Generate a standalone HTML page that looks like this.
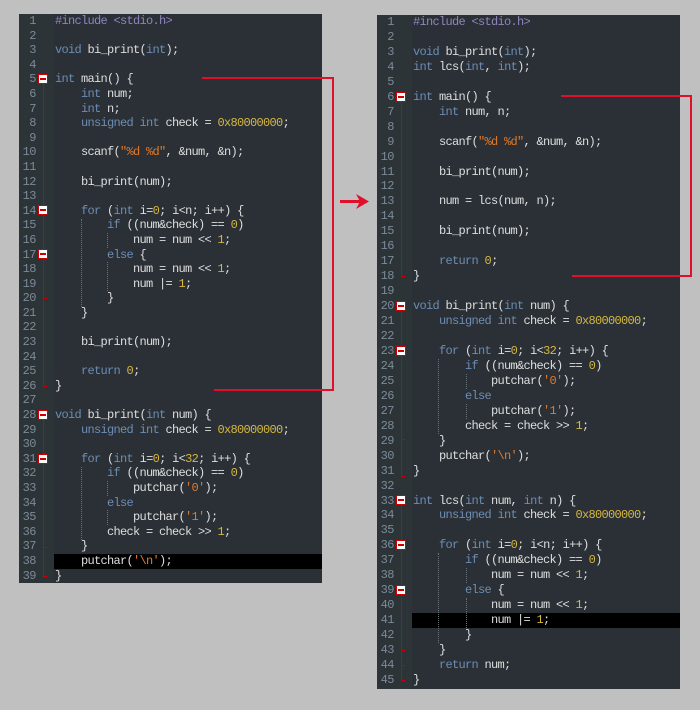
<!DOCTYPE html><html><head><style>
body{margin:0;width:700px;height:710px;background:#c0c0c0;position:relative;overflow:hidden;font-family:"Liberation Mono",monospace}
.p{position:absolute;background:#2a3035}
.g{position:absolute;left:0;top:0;bottom:0;width:35px;background:#2d3438}
.ln{position:absolute;left:0;width:17px;text-align:right;color:#7b8a98;font-size:12px;letter-spacing:-0.5px}
.c{position:absolute;white-space:pre;color:#dedede;font-size:12px;letter-spacing:-0.7px}
.k{color:#6d8db5}.n{color:#d6b840}.s{color:#e07a2c}.pp{color:#8f84bd}
.hl{position:absolute;background:#000}
.fb{position:absolute;width:8px;height:8px;background:#fff;border:1px solid #c00}
.fb:after{content:"";position:absolute;left:1px;top:3px;width:6px;height:2px;background:#c00}
.fv{position:absolute;width:1px;background:#c00}
.ft{position:absolute;height:1px;width:4px;background:#c00}
.gd{position:absolute;width:0;border-left:1px dotted #6a7378}
.r{position:absolute;background:#e0102a}
</style></head><body>

<div class="p" id="L" style="left:19px;top:14px;width:303px;height:569px">
<div class="g"></div>
<div class="hl" style="left:35px;right:0;top:540.2px;height:14.6px"></div>
<div class="fv" style="left:24px;top:66px;height:307px"></div>
<div class="fv" style="left:24px;top:401px;height:161px"></div>
<div class="ft" style="left:24px;top:284px"></div>
<div class="ft" style="left:24px;top:372px"></div>
<div class="ft" style="left:24px;top:533px"></div>
<div class="ft" style="left:24px;top:562px"></div>
<div class="fb" style="left:19px;top:60px"></div>
<div class="fb" style="left:19px;top:191px"></div>
<div class="fb" style="left:19px;top:235px"></div>
<div class="fb" style="left:19px;top:396px"></div>
<div class="fb" style="left:19px;top:440px"></div>
<div class="gd" style="left:62px;top:205px;height:88px"></div>
<div class="gd" style="left:88px;top:219px;height:15px"></div>
<div class="gd" style="left:88px;top:248px;height:29px"></div>
<div class="gd" style="left:62px;top:453px;height:73px"></div>
<div class="gd" style="left:88px;top:467px;height:15px"></div>
<div class="gd" style="left:88px;top:496px;height:15px"></div>
<div class="ln" style="top:0;line-height:14.6px">1<br>2<br>3<br>4<br>5<br>6<br>7<br>8<br>9<br>10<br>11<br>12<br>13<br>14<br>15<br>16<br>17<br>18<br>19<br>20<br>21<br>22<br>23<br>24<br>25<br>26<br>27<br>28<br>29<br>30<br>31<br>32<br>33<br>34<br>35<br>36<br>37<br>38<br>39</div>
<div class="c" style="left:36px;top:0;line-height:14.6px"><span class="pp">#include &lt;stdio.h&gt;</span>

<span class="k">void</span> bi_print(<span class="k">int</span>);

<span class="k">int</span> main() {
    <span class="k">int</span> num;
    <span class="k">int</span> n;
    <span class="k">unsigned int</span> check = <span class="n">0x80000000</span>;

    scanf(<span class="s">"%d %d"</span>, &amp;num, &amp;n);

    bi_print(num);

    <span class="k">for</span> (<span class="k">int</span> i=<span class="n">0</span>; i&lt;n; i++) {
        <span class="k">if</span> ((num&amp;check) == <span class="n">0</span>)
            num = num &lt;&lt; <span class="n">1</span>;
        <span class="k">else</span> {
            num = num &lt;&lt; <span class="n">1</span>;
            num |= <span class="n">1</span>;
        }
    }

    bi_print(num);

    <span class="k">return</span> <span class="n">0</span>;
}

<span class="k">void</span> bi_print(<span class="k">int</span> num) {
    <span class="k">unsigned int</span> check = <span class="n">0x80000000</span>;

    <span class="k">for</span> (<span class="k">int</span> i=<span class="n">0</span>; i&lt;<span class="n">32</span>; i++) {
        <span class="k">if</span> ((num&amp;check) == <span class="n">0</span>)
            putchar(<span class="s">'0'</span>);
        <span class="k">else</span>
            putchar(<span class="s">'1'</span>);
        check = check &gt;&gt; <span class="n">1</span>;
    }
    putchar(<span class="s">'\n'</span>);
}</div>
</div>

<div class="p" id="R" style="left:377px;top:15px;width:303px;height:674px">
<div class="g"></div>
<div class="hl" style="left:35px;right:0;top:598px;height:15px"></div>
<div class="fv" style="left:24px;top:82px;height:180px"></div>
<div class="fv" style="left:24px;top:291px;height:171px"></div>
<div class="fv" style="left:24px;top:485px;height:181px"></div>
<div class="ft" style="left:24px;top:261px"></div>
<div class="ft" style="left:24px;top:424px"></div>
<div class="ft" style="left:24px;top:461px"></div>
<div class="ft" style="left:24px;top:635px"></div>
<div class="ft" style="left:24px;top:650px"></div>
<div class="ft" style="left:24px;top:665px"></div>
<div class="fb" style="left:19px;top:77px"></div>
<div class="fb" style="left:19px;top:286px"></div>
<div class="fb" style="left:19px;top:331px"></div>
<div class="fb" style="left:19px;top:480px"></div>
<div class="fb" style="left:19px;top:525px"></div>
<div class="fb" style="left:19px;top:570px"></div>
<div class="gd" style="left:61px;top:344px;height:75px"></div>
<div class="gd" style="left:89px;top:359px;height:15px"></div>
<div class="gd" style="left:89px;top:389px;height:15px"></div>
<div class="gd" style="left:61px;top:538px;height:90px"></div>
<div class="gd" style="left:89px;top:553px;height:15px"></div>
<div class="gd" style="left:89px;top:583px;height:30px"></div>
<div class="ln" style="top:0;line-height:14.95px">1<br>2<br>3<br>4<br>5<br>6<br>7<br>8<br>9<br>10<br>11<br>12<br>13<br>14<br>15<br>16<br>17<br>18<br>19<br>20<br>21<br>22<br>23<br>24<br>25<br>26<br>27<br>28<br>29<br>30<br>31<br>32<br>33<br>34<br>35<br>36<br>37<br>38<br>39<br>40<br>41<br>42<br>43<br>44<br>45</div>
<div class="c" style="left:36px;top:0;line-height:14.95px"><span class="pp">#include &lt;stdio.h&gt;</span>

<span class="k">void</span> bi_print(<span class="k">int</span>);
<span class="k">int</span> lcs(<span class="k">int</span>, <span class="k">int</span>);

<span class="k">int</span> main() {
    <span class="k">int</span> num, n;

    scanf(<span class="s">"%d %d"</span>, &amp;num, &amp;n);

    bi_print(num);

    num = lcs(num, n);

    bi_print(num);

    <span class="k">return</span> <span class="n">0</span>;
}

<span class="k">void</span> bi_print(<span class="k">int</span> num) {
    <span class="k">unsigned int</span> check = <span class="n">0x80000000</span>;

    <span class="k">for</span> (<span class="k">int</span> i=<span class="n">0</span>; i&lt;<span class="n">32</span>; i++) {
        <span class="k">if</span> ((num&amp;check) == <span class="n">0</span>)
            putchar(<span class="s">'0'</span>);
        <span class="k">else</span>
            putchar(<span class="s">'1'</span>);
        check = check &gt;&gt; <span class="n">1</span>;
    }
    putchar(<span class="s">'\n'</span>);
}

<span class="k">int</span> lcs(<span class="k">int</span> num, <span class="k">int</span> n) {
    <span class="k">unsigned int</span> check = <span class="n">0x80000000</span>;

    <span class="k">for</span> (<span class="k">int</span> i=<span class="n">0</span>; i&lt;n; i++) {
        <span class="k">if</span> ((num&amp;check) == <span class="n">0</span>)
            num = num &lt;&lt; <span class="n">1</span>;
        <span class="k">else</span> {
            num = num &lt;&lt; <span class="n">1</span>;
            num |= <span class="n">1</span>;
        }
    }
    <span class="k">return</span> num;
}</div>
</div>

<div class="r" style="left:202px;top:77px;width:132px;height:2px"></div>
<div class="r" style="left:332px;top:77px;width:2px;height:314px"></div>
<div class="r" style="left:214px;top:389px;width:120px;height:2px"></div>
<div class="r" style="left:561px;top:95px;width:131px;height:2px"></div>
<div class="r" style="left:690px;top:95px;width:2px;height:182px"></div>
<div class="r" style="left:572px;top:275px;width:120px;height:2px"></div>
<div class="r" style="left:340px;top:200px;width:24px;height:3px"></div>
<svg style="position:absolute;left:356px;top:194px" width="16" height="16"><path d="M0 0 L13 7.5 L0 15 L4 7.5 Z" fill="#e0102a"/></svg>
</body></html>
